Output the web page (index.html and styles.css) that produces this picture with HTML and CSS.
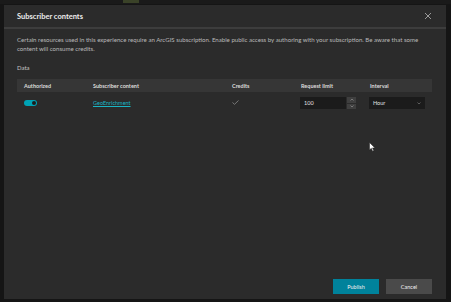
FILE: index.html
```html
<!DOCTYPE html>
<html>
    <head>
        <meta name="viewport" content="width=device-width, initial-scale=1.0">
        <title>Subscriber contents</title>
        <link rel="stylesheet" href="styles.css">
    </head>
    <body>
        <div class="map-strip">
            <span class="map-spot"></span>
        </div>
        <div class="modal">
            <div class="modal-header">
                <h1 class="modal-title">Subscriber contents</h1>
                <svg class="close-icon" width="8" height="8" viewBox="0 0 8 8">
                    <path d="M1 1 L7 7 M7 1 L1 7" stroke="#9a9a9a" stroke-width="1"/>
                </svg>
            </div>
            <div class="modal-body">
                <p class="intro">Certain resources used in this experience require an ArcGIS subscription. Enable public access by authoring with your subscription. Be aware that some content will consume credits.</p>
                <div class="section-label">Data</div>
                <div class="table">
                    <div class="row table-head">
                        <div>Authorized</div>
                        <div>Subscriber content</div>
                        <div>Credits</div>
                        <div>Request limit</div>
                        <div>Interval</div>
                    </div>
                    <div class="row table-row">
                        <div><span class="toggle"><span class="knob"></span></span></div>
                        <div><a class="link" href="#">GeoEnrichment</a></div>
                        <div>
                            <svg width="7" height="5" viewBox="0 0 7 5"><path d="M0.5 2.5 L2.5 4.3 L6.5 0.5" fill="none" stroke="#8a8a8a" stroke-width="0.8"/></svg>
                        </div>
                        <div class="number-field">
                            <span class="number-input">100</span>
                            <span class="spinner">
                                <span class="spin-btn"><svg width="4" height="3" viewBox="0 0 4 3"><path d="M0.5 2.5 L2 1 L3.5 2.5" fill="none" stroke="#a0a0a0" stroke-width="0.6"/></svg></span>
                                <span class="spin-btn"><svg width="4" height="3" viewBox="0 0 4 3"><path d="M0.5 0.5 L2 2 L3.5 0.5" fill="none" stroke="#a0a0a0" stroke-width="0.6"/></svg></span>
                            </span>
                        </div>
                        <div>
                            <span class="select">Hour<svg width="4" height="3" viewBox="0 0 4 3"><path d="M0.5 0.5 L2 2 L3.5 0.5" fill="none" stroke="#8a8a8a" stroke-width="0.6"/></svg></span>
                        </div>
                    </div>
                </div>
            </div>
            <div class="modal-footer">
                <button class="btn btn-primary">Publish</button>
                <button class="btn btn-secondary">Cancel</button>
            </div>
            <svg class="cursor" width="7" height="10" viewBox="0 0 7 10">
                <path d="M0.5 0.5 L0.5 8 L2.3 6.3 L3.6 9.3 L4.8 8.8 L3.5 5.9 L6 5.9 Z" fill="#fff" stroke="#222" stroke-width="0.5"/>
            </svg>
        </div>
    </body>
</html>
```

FILE: styles.css
```css
*{
    margin: 0;
    padding: 0;
    box-sizing: border-box;
}
html{
    font-family: "Lato", "Open Sans", sans-serif;
}
body{
    width: 451px;
    height: 302px;
    background-color: #151515;
    overflow: hidden;
    position: relative;
}
.map-strip{
    height: 4px;
    background-color: #1a1a1a;
    position: relative;
}
.map-spot{
    position: absolute;
    left: 123px;
    top: 0;
    width: 16px;
    height: 3px;
    background-color: #3a4228;
}
.modal{
    position: relative;
    margin: 1px 5px 0 4px;
    height: 294px;
    background-color: #2b2b2b;
    display: flex;
    flex-direction: column;
}
.modal-header{
    height: 24px;
    display: flex;
    align-items: center;
    justify-content: space-between;
    padding: 0 14px 0 13px;
    border-bottom: 2px solid #3d3d3d;
}
.modal-title{
    font-size: 7.5px;
    font-weight: bold;
    color: #ececec;
}
.modal-body{
    flex: 1;
    padding: 6px 14px 0 13px;
}
.intro{
    font-size: 6.1px;
    line-height: 9px;
    color: #b9b9b9;
}
.section-label{
    margin-top: 11px;
    font-size: 6px;
    color: #c4c4c4;
}
.table{
    margin-top: 8px;
}
.row{
    display: grid;
    grid-template-columns: 69px 139px 69px 69px 1fr;
    padding-left: 7px;
    align-items: center;
}
.table-head{
    height: 13px;
    background-color: #363636;
    font-size: 5.5px;
    font-weight: bold;
    color: #dcdcdc;
}
.table-row{
    height: 22px;
    font-size: 5.5px;
    color: #d6d6d6;
}
.toggle{
    display: block;
    width: 13px;
    height: 6px;
    border-radius: 3px;
    background-color: #00a3b5;
    position: relative;
}
.knob{
    position: absolute;
    right: 1px;
    top: 1px;
    width: 4px;
    height: 4px;
    border-radius: 50%;
    background-color: #1d1d1d;
}
.link{
    color: #19b4c4;
    text-decoration: underline;
}
.number-field{
    display: flex;
    margin-left: -1px;
}
.number-input{
    width: 46px;
    height: 12px;
    line-height: 12px;
    padding-left: 4px;
    background-color: #1b1b1b;
    color: #e0e0e0;
}
.spinner{
    display: flex;
    flex-direction: column;
    gap: 1px;
    margin-left: 1px;
}
.spin-btn{
    display: flex;
    align-items: center;
    justify-content: center;
    width: 9px;
    height: 5.5px;
    background-color: #3f3f3f;
}
.select{
    display: flex;
    justify-content: space-between;
    align-items: center;
    width: 56px;
    height: 12px;
    padding: 0 4px;
    margin-left: -1px;
    background-color: #1b1b1b;
    color: #e0e0e0;
}
.modal-footer{
    display: flex;
    justify-content: flex-end;
    gap: 7px;
    padding: 0 14px 5px 0;
}
.btn{
    width: 46px;
    height: 15px;
    border: none;
    font-family: inherit;
    font-size: 5.5px;
    color: #f0f0f0;
}
.btn-primary{
    background-color: #00829b;
}
.btn-secondary{
    background-color: #4a4a4a;
}
.cursor{
    position: absolute;
    left: 365px;
    top: 137px;
}
```
